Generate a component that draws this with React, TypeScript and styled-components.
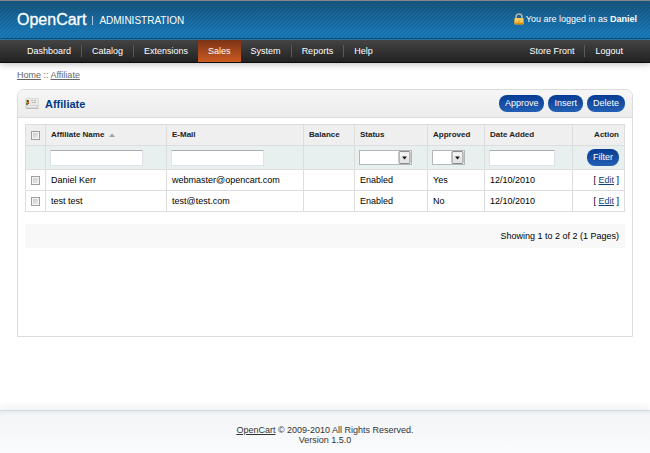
import React from "react";
import styled, { createGlobalStyle } from "styled-components";

const GlobalStyle = createGlobalStyle`
  *, *::before, *::after { box-sizing: border-box; }
  html { background: #ffffff; }
  body {
    margin: 0;
    font-family: "Liberation Sans", Arial, Helvetica, sans-serif;
    font-size: 9px;
    line-height: 10px;
    color: #000000;
  }
  button, input, select { font: inherit; }
`;

const Page = styled.div`
  display: flex;
  flex-direction: column;
  min-height: 100vh;
`;

const Header = styled.header`
  display: flex;
  align-items: center;
  justify-content: space-between;
  height: 40px;
  padding: 0 17px;
  border-top: 1px solid #84888a;
  border-bottom: 1px solid #2f7fb0;
  box-shadow: inset 0 -1px 0 #0d5688;
  background:
    linear-gradient(135deg, rgba(0, 0, 0, 0.12) 0 12%, transparent 12% 38%, rgba(0, 0, 0, 0.12) 38% 62%, transparent 62% 88%, rgba(0, 0, 0, 0.12) 88%) 0 0 / 4px 4px,
    linear-gradient(#17557f, #1a80c2);
  color: #ffffff;
`;

const Brand = styled.div`
  display: flex;
  align-items: center;
`;

const Logo = styled.span`
  font-size: 16px;
  line-height: 20px;
  -webkit-text-stroke: 0.3px #ffffff;
`;

const Section = styled.span`
  margin-left: 6px;
  padding-left: 6px;
  border-left: 1px solid #a9c8de;
  font-size: 10px;
  line-height: 9px;
`;

const Login = styled.div`
  display: flex;
  align-items: center;
  gap: 2px;
  margin-right: -4px;
  padding-bottom: 2px;
`;

const MenuBar = styled.nav`
  display: flex;
  justify-content: space-between;
  height: 23px;
  padding: 0 17px;
  border-bottom: 1px solid #0c0c0c;
  background: linear-gradient(#444444, #222222);
  box-shadow: 0 1px 7px rgba(0, 0, 0, 0.28);
`;

const MenuList = styled.ul`
  display: flex;
  margin: 0;
  padding: 0;
  list-style: none;
`;

const MenuItem = styled.li<{ $active?: boolean }>`
  display: flex;
  align-items: center;
  background: ${(p) => (p.$active ? "linear-gradient(#7b3416, #cc5a22)" : "none")};

  & + &::before {
    content: "";
    width: 1px;
    height: 12px;
    background: ${(p) => (p.$active ? "transparent" : "#5a5a5a")};
  }
`;

const MenuLink = styled.a`
  padding: 0 10px;
  color: #ffffff;
  line-height: 22px;
  text-decoration: none;
`;

const Main = styled.main`
  flex: 1;
  padding: 7px 17px 0;
`;

const Breadcrumb = styled.div`
  margin-bottom: 9px;
  color: #666666;

  a { color: #666666; }
`;

const Box = styled.section`
  border: 1px solid #dcdcdc;
  border-radius: 7px 7px 0 0;
`;

const BoxHeading = styled.div`
  display: flex;
  align-items: center;
  gap: 6px;
  height: 28px;
  padding: 0 7px;
  border-bottom: 1px solid #dcdcdc;
  border-radius: 6px 6px 0 0;
  background: linear-gradient(#f6f6f6, #ececec);
`;

const Title = styled.h1`
  flex: 1;
  margin: 0;
  color: #003a88;
  font-size: 11px;
  line-height: 14px;
`;

const Buttons = styled.div`
  display: flex;
  gap: 4px;
`;

const Button = styled.button`
  height: 17px;
  padding: 0 6px;
  border: 0;
  border-radius: 8px;
  background: linear-gradient(#073c93, #2360b4);
  color: #ffffff;
  line-height: 17px;
  cursor: pointer;
`;

const BoxContent = styled.div`
  min-height: 218px;
  padding: 6px 7px;
`;

const Table = styled.table`
  width: 100%;
  margin-bottom: 12px;
  border-collapse: separate;
  border-spacing: 0;
  border-top: 1px solid #dddddd;
  border-left: 1px solid #dddddd;
  table-layout: fixed;
`;

const Col = styled.col<{ $w?: number }>`
  width: ${(p) => (p.$w ? `${p.$w}px` : "auto")};
`;

const Row = styled.tr<{ $filter?: boolean }>`
  height: ${(p) => (p.$filter ? "24px" : "21px")};
  background: ${(p) => (p.$filter ? "#e7efef" : "#ffffff")};
`;

const Cell = styled.td<{ $align?: string }>`
  padding: 0 5px;
  border-right: 1px solid #dddddd;
  border-bottom: 1px solid #dddddd;
  text-align: ${(p) => p.$align || "left"};
  vertical-align: middle;
  white-space: nowrap;
`;

const FilterCell = styled(Cell)`
  padding: 0 4px;
`;

const HeadCell = styled(Cell).attrs({ as: "th", scope: "col" })`
  background: #efefef;
  color: #222222;
  font-size: 8px;
`;

const SortLink = styled.a`
  display: flex;
  align-items: center;
  gap: 5px;
  color: inherit;
  text-decoration: none;
`;

const EditLink = styled.a`
  color: #123f7a;
`;

const Check = styled.input.attrs({ type: "checkbox" })`
  display: block;
  width: 9px;
  height: 9px;
  margin: 0 auto;
  appearance: none;
  border: 1px solid #9b9ea1;
  box-shadow: inset 0 0 0 1px #f4f4f4;
  background: linear-gradient(135deg, #bfc4c9, #f3f3f3);

  &:checked { background: #245da8; }
`;

const TextField = styled.input.attrs({ type: "text" })<{ $w: number }>`
  display: block;
  width: ${(p) => p.$w}px;
  max-width: 100%;
  height: 16px;
  padding: 0 3px;
  border: 1px solid #dde3e8;
  border-top-color: #abadb3;
  border-radius: 1px;
  background: #ffffff;
`;

const SelectWrap = styled.span<{ $w: number }>`
  display: grid;
  grid-template-columns: 1fr 13px;
  width: ${(p) => p.$w}px;
  height: 15px;
  border: 1px solid #b4b7ba;
  background: #ffffff;

  select {
    grid-area: 1 / 1 / 2 / 3;
    width: 100%;
    height: 13px;
    padding: 0 14px 0 2px;
    appearance: none;
    border: 0;
    background: transparent;
  }

  svg {
    grid-area: 1 / 2 / 2 / 3;
    pointer-events: none;
  }
`;

const Pagination = styled.div`
  padding: 7px 6px;
  background: #f8f8f8;
  text-align: right;
`;

const Footer = styled.footer`
  height: 43px;
  padding-top: 14px;
  border-top: 1px solid #d3dce1;
  background: linear-gradient(#e6ebee, #f3f5f7 4px, #fafbfc);
  box-shadow: 0 -2px 8px rgba(60, 80, 95, 0.1);
  color: #333333;
  text-align: center;

  a { color: #333333; }
`;

function LockIcon() {
  return (
    <svg width="10" height="12" viewBox="0 0 10 12" aria-hidden="true">
      <path d="M2 6V4a3 3 0 0 1 6 0v2" fill="none" stroke="#b7b6ad" strokeWidth="1.5" />
      <rect x="0.3" y="5" width="9.4" height="6.5" rx="0.8" fill="#f2b02f" />
      <path d="M1 6h8M1 8h8" stroke="#ffe28b" />
      <path d="M1 10.5h8" stroke="#dc8c16" />
      <path d="M5 7.5v2" stroke="#c98a22" />
    </svg>
  );
}

function CardIcon() {
  return (
    <svg width="14" height="11" viewBox="0 0 14 11" aria-hidden="true">
      <rect x="0.5" y="0.5" width="13" height="10" rx="1" fill="#e9e9e7" stroke="#dcdcdb" />
      <path d="M1 7h12v3H1z" fill="#d4d4d3" />
      <path d="M1 10.5h12.5" stroke="#bdbdbd" />
      <path d="M1 2h3v4H1z" fill="#c1a865" />
      <path d="M2 2h1.5v2H2z" fill="#4a3826" />
      <path d="M1 5h2v2H1z" fill="#4d8a3b" />
      <path d="M3 4h1v2H3z" fill="#c6422e" />
      <path d="M6 2.5h2M9 2.5h2M7 4.5h4" stroke="#bcbcbc" />
      <path d="M3 8.5h8" stroke="#f2f2f2" />
    </svg>
  );
}

function SortIcon() {
  return (
    <svg width="6" height="4" viewBox="0 0 6 4" aria-hidden="true">
      <path d="M0 4L3 0.5L6 4z" fill="#a2a2a2" />
    </svg>
  );
}

function Dropdown({ label, width, options }: { label: string; width: number; options: string[] }) {
  return (
    <SelectWrap $w={width}>
      <select aria-label={label} defaultValue="">
        <option value=""></option>
        {options.map((o) => (
          <option key={o}>{o}</option>
        ))}
      </select>
      <svg width="13" height="13" viewBox="0 0 13 13" aria-hidden="true">
        <rect x="1" y="0.5" width="11" height="12" rx="1" fill="#e4e4e4" stroke="#8b8b8b" />
        <path d="M2 1.5h9v5H2z" fill="#f3f3f3" />
        <path d="M4 5.5h5L6.5 8.5z" fill="#111111" />
      </svg>
    </SelectWrap>
  );
}

const leftMenu = ["Dashboard", "Catalog", "Extensions", "Sales", "System", "Reports", "Help"];
const rightMenu = ["Store Front", "Logout"];
const columns = [20, 121, 137, 51, 73, 57, 88];
const affiliates = [
  { name: "Daniel Kerr", email: "webmaster@opencart.com", balance: "", status: "Enabled", approved: "Yes", added: "12/10/2010" },
  { name: "test test", email: "test@test.com", balance: "", status: "Enabled", approved: "No", added: "12/10/2010" },
];

function Menu({ items, active }: { items: string[]; active?: string }) {
  return (
    <MenuList>
      {items.map((item) => (
        <MenuItem key={item} $active={item === active}>
          <MenuLink href="#">{item}</MenuLink>
        </MenuItem>
      ))}
    </MenuList>
  );
}

function AffiliateTable() {
  return (
    <Table>
      <colgroup>
        {columns.map((w, i) => (
          <Col key={i} $w={w} />
        ))}
        <Col />
      </colgroup>
      <thead>
        <Row>
          <HeadCell>
            <Check aria-label="Select all" />
          </HeadCell>
          <HeadCell>
            <SortLink href="#">
              Affiliate Name <SortIcon />
            </SortLink>
          </HeadCell>
          <HeadCell>E-Mail</HeadCell>
          <HeadCell>Balance</HeadCell>
          <HeadCell>Status</HeadCell>
          <HeadCell>Approved</HeadCell>
          <HeadCell>Date Added</HeadCell>
          <HeadCell $align="right">Action</HeadCell>
        </Row>
      </thead>
      <tbody>
        <Row $filter>
          <FilterCell />
          <FilterCell>
            <TextField $w={93} aria-label="Affiliate name" />
          </FilterCell>
          <FilterCell>
            <TextField $w={93} aria-label="E-mail" />
          </FilterCell>
          <FilterCell />
          <FilterCell>
            <Dropdown label="Status" width={53} options={["Enabled", "Disabled"]} />
          </FilterCell>
          <FilterCell>
            <Dropdown label="Approved" width={33} options={["Yes", "No"]} />
          </FilterCell>
          <FilterCell>
            <TextField $w={66} aria-label="Date added" />
          </FilterCell>
          <Cell $align="right">
            <Button type="button">Filter</Button>
          </Cell>
        </Row>
        {affiliates.map((a) => (
          <Row key={a.email}>
            <Cell>
              <Check aria-label={`Select ${a.name}`} />
            </Cell>
            <Cell>{a.name}</Cell>
            <Cell>{a.email}</Cell>
            <Cell>{a.balance}</Cell>
            <Cell>{a.status}</Cell>
            <Cell>{a.approved}</Cell>
            <Cell>{a.added}</Cell>
            <Cell $align="right">
              [ <EditLink href="#">Edit</EditLink> ]
            </Cell>
          </Row>
        ))}
      </tbody>
    </Table>
  );
}

export default function App() {
  return (
    <>
      <GlobalStyle />
      <Page>
        <Header>
          <Brand>
            <Logo>OpenCart</Logo>
            <Section>ADMINISTRATION</Section>
          </Brand>
          <Login>
            <LockIcon />
            <span>
              You are logged in as <b>Daniel</b>
            </span>
          </Login>
        </Header>
        <MenuBar>
          <Menu items={leftMenu} active="Sales" />
          <Menu items={rightMenu} />
        </MenuBar>
        <Main>
          <Breadcrumb>
            <a href="#">Home</a> :: <a href="#">Affiliate</a>
          </Breadcrumb>
          <Box>
            <BoxHeading>
              <CardIcon />
              <Title>Affiliate</Title>
              <Buttons>
                <Button type="button">Approve</Button>
                <Button type="button">Insert</Button>
                <Button type="button">Delete</Button>
              </Buttons>
            </BoxHeading>
            <BoxContent>
              <AffiliateTable />
              <Pagination>Showing 1 to 2 of 2 (1 Pages)</Pagination>
            </BoxContent>
          </Box>
        </Main>
        <Footer>
          <a href="#">OpenCart</a> © 2009-2010 All Rights Reserved.
          <br />
          Version 1.5.0
        </Footer>
      </Page>
    </>
  );
}
